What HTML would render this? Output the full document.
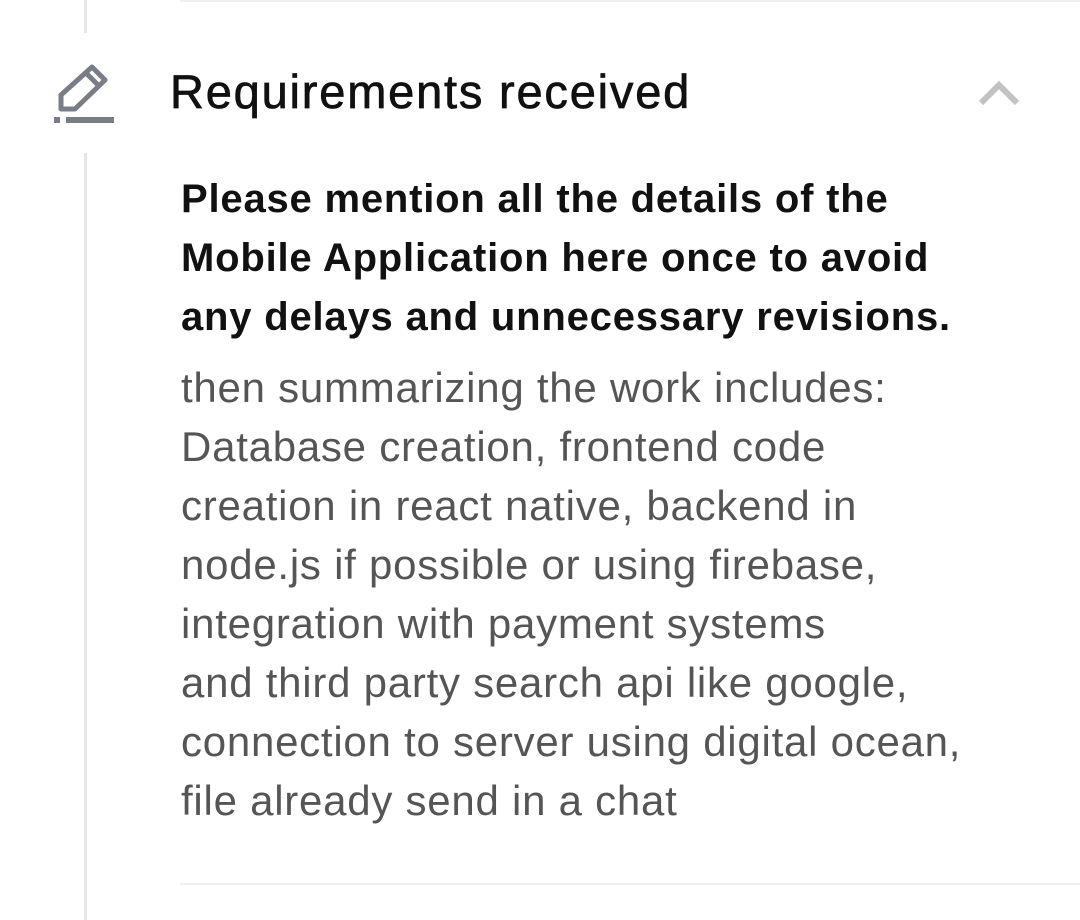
<!DOCTYPE html>
<html><head><meta charset="utf-8"><style>
body{margin:0;width:1080px;height:920px;background:#fff;position:relative;overflow:hidden;font-family:"Liberation Sans",sans-serif}
.vl{position:absolute;left:84px;width:3px;background:#e6e6e6}
.hl{position:absolute;left:180px;right:0;height:2px;background:#efefef}
.title{position:absolute;left:170px;top:66px;font-size:47px;letter-spacing:1.8px;color:#111;line-height:52px;-webkit-text-stroke:0.7px #111;white-space:nowrap}
.b{position:absolute;left:181px;top:170px;font-size:40px;letter-spacing:0.8px;font-weight:bold;line-height:59px;color:#111;white-space:nowrap}
.g{position:absolute;left:181px;top:358px;font-size:42px;letter-spacing:0.75px;line-height:59px;color:#555;white-space:nowrap}
</style></head><body>
<div class="vl" style="top:0;height:33px"></div>
<div class="vl" style="top:153px;height:767px"></div>
<div class="hl" style="top:0"></div>
<div class="hl" style="top:883px"></div>
<svg style="position:absolute;left:50px;top:62px" width="70" height="66" viewBox="50 62 70 66">
<path d="M61 109 V95 L92 67 L105 80 L75 109 Z" fill="none" stroke="#7a7d85" stroke-width="5" stroke-linejoin="round"/>
<path d="M86 73 L99 86" stroke="#7a7d85" stroke-width="5"/>
<rect x="54" y="117" width="6" height="6" fill="#7a7d85"/>
<rect x="66" y="117" width="48" height="6" fill="#7a7d85"/>
</svg>
<div class="title">Requirements received</div>
<svg style="position:absolute;left:970px;top:75px" width="60" height="40">
<path d="M11 28 L29 10 L47 28" fill="none" stroke="#c2c2c2" stroke-width="6"/>
</svg>
<div class="b">Please mention all the details of the<br>Mobile Application here once to avoid<br>any delays and unnecessary revisions.</div>
<div class="g">then summarizing the work includes:<br>Database creation, frontend code<br>creation in react native, backend in<br>node.js if possible or using firebase,<br>integration with payment systems<br>and third party search api like google,<br>connection to server using digital ocean,<br>file already send in a chat</div>
</body></html>
